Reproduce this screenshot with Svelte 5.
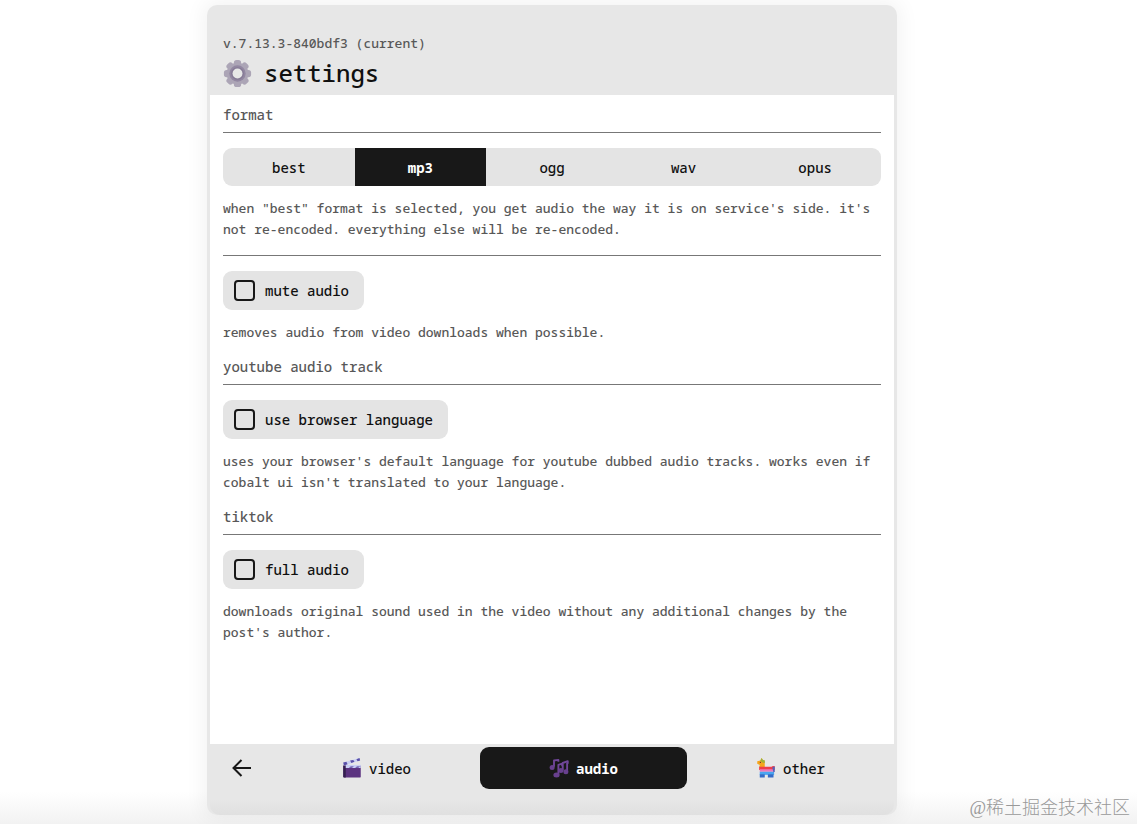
<script lang="ts">
	const formats = ['best', 'mp3', 'ogg', 'wav', 'opus'];
	const tabs = ['video', 'audio', 'other'];

	let format = $state('mp3');
	let tab = $state('audio');
	let muteAudio = $state(false);
	let browserLanguage = $state(false);
	let fullAudio = $state(false);
</script>

<div class="page">
	<main class="popup">
		<header>
			<p class="version">v.7.13.3-840bdf3 (current)</p>
			<h1>
				<svg class="gear" viewBox="0 0 32 32" aria-hidden="true">
					<g fill="#aca5b6">
						{#each [0, 45, 90, 135] as angle}
							<rect x="12" y="1" width="8" height="30" rx="3" transform="rotate({angle} 16 16)" />
						{/each}
						<circle cx="16" cy="16" r="12" />
					</g>
					<circle cx="16" cy="16" r="9" fill="#9287a1" />
					<circle cx="16" cy="16" r="7" fill="#857995" />
					<circle cx="16" cy="16" r="5.5" fill="#e7e7e7" />
				</svg>
				settings
			</h1>
		</header>

		<div class="content">
			<section>
				<h2>format</h2>
				<div class="switches">
					{#each formats as name}
						<button class:active={format === name} aria-pressed={format === name} onclick={() => (format = name)}>
							{name}
						</button>
					{/each}
				</div>
				<p class="explanation">
					when "best" format is selected, you get audio the way it is on service's side. it's not re-encoded. everything
					else will be re-encoded.
				</p>
				<hr />
				<label class="checkbox">
					<input type="checkbox" bind:checked={muteAudio} />
					mute audio
				</label>
				<p class="explanation">removes audio from video downloads when possible.</p>
			</section>

			<section>
				<h2>youtube audio track</h2>
				<label class="checkbox">
					<input type="checkbox" bind:checked={browserLanguage} />
					use browser language
				</label>
				<p class="explanation">
					uses your browser's default language for youtube dubbed audio tracks. works even if cobalt ui isn't translated
					to your language.
				</p>
			</section>

			<section>
				<h2>tiktok</h2>
				<label class="checkbox">
					<input type="checkbox" bind:checked={fullAudio} />
					full audio
				</label>
				<p class="explanation">
					downloads original sound used in the video without any additional changes by the post's author.
				</p>
			</section>
		</div>

		<nav>
			<button class="back" aria-label="back">
				<svg viewBox="0 0 20 20" aria-hidden="true">
					<path d="M19 10H1.5M9.5 2L1.5 10L9.5 18" fill="none" stroke="#181818" stroke-width="2" />
				</svg>
			</button>
			{#each tabs as name}
				<button class="tab" class:active={tab === name} onclick={() => (tab = name)}>
					<svg class="emoji" viewBox="0 0 32 32" aria-hidden="true">
						{#if name === 'video'}
							<rect x="2" y="12" width="28" height="19" rx="1" fill="#5c3380" />
							<path d="M2 12H6V31H4Q2 31 2 29Z" fill="#34204f" />
							<path d="M6 11H30V16H6Z" fill="#c9d0f4" />
							<path d="M11 16L14 13H19L16 16ZM21 16L24 13H29L26 16Z" fill="#7567b4" />
							<path d="M2 7L28 0L29 4L3 12Z" fill="#c9d0f4" />
							<path d="M2 7L7 6L9 10L3 12ZM13 4L18 3L20 6L15 8ZM23 2L28 0L29 4L25 5Z" fill="#5a50a8" />
						{:else if name === 'audio'}
							<g fill="none" stroke="#704699" stroke-width="3" stroke-linejoin="round">
								<path d="M8 14V4L15 3V6M15 26V11L21 9V13M22 20V8L30 5V9M29 8V21" />
							</g>
							<g fill="#68408e">
								<ellipse cx="5" cy="15" rx="4" ry="4" />
								<ellipse cx="12" cy="27" rx="5" ry="4" />
								<ellipse cx="19" cy="20" rx="4" ry="4" />
								<ellipse cx="27" cy="22" rx="4" ry="4" />
							</g>
						{:else}
							<path d="M2 5L7 4L9 0L11 3L14 4V15H5L6 11L2 9Z" fill="#f5a51c" />
							<path d="M7 4L9 0L11 3L14 4V8Q10 8 7 4Z" fill="#9bb33b" />
							<path d="M5 14H25Q26 12 30 13V19H5Z" fill="#ef3e4a" />
							<path d="M6 18H29V22H6Z" fill="#ef78ba" />
							<path d="M6 22H29V27H6Z" fill="#49a5f1" />
							<path d="M6 26H14V31H6ZM19 26H28V31H19Z" fill="#356cc9" />
							<path d="M26 15L30 13V21L28 23Z" fill="#5362bb" />
							<circle cx="7" cy="7" r="1" fill="#573638" />
						{/if}
					</svg>
					{name}
				</button>
			{/each}
		</nav>
	</main>
	<span class="watermark">@稀土掘金技术社区</span>
</div>

<style>
	:global(body) {
		margin: 0;
		background: #fff;
	}
	.page,
	button {
		font-family: 'Noto Sans Mono', 'DejaVu Sans Mono', monospace;
		color: #101010;
	}
	.page {
		position: relative;
		box-sizing: border-box;
		min-height: 100vh;
		padding: 5px 33px 9px 0;
		display: flex;
		background: linear-gradient(to top, #f2f2f2, #fff 32px);
	}
	.popup {
		box-sizing: border-box;
		width: 100%;
		max-width: 690px;
		margin: 0 auto;
		padding: 0 3px;
		display: flex;
		flex-direction: column;
		background: #e7e7e7;
		border-radius: 10px;
		box-shadow: 0 0 20px 4px rgba(0, 0, 0, 0.05);
	}
	header {
		padding: 28px 13px 3px;
	}
	h1,
	h2,
	p {
		margin: 0;
		font-weight: 500;
	}
	.version,
	.explanation {
		font-size: 13px;
		line-height: 21px;
		color: #585858;
	}
	h1 {
		display: flex;
		align-items: center;
		gap: 12px;
		font-size: 24px;
		line-height: 38px;
	}
	.gear {
		width: 29px;
		height: 29px;
	}
	.content {
		flex: 1;
		padding: 9px 13px 0;
		background: #fff;
	}
	h2 {
		margin-bottom: 15px;
		padding-bottom: 6px;
		border-bottom: 1px solid #777;
		font-size: 14px;
		line-height: 22px;
		color: #585858;
	}
	hr {
		margin: 0 0 15px;
		border: 0;
		border-top: 1px solid #777;
	}
	button {
		border: 0;
		padding: 0;
		background: none;
		font-size: 14px;
		font-weight: 500;
		cursor: pointer;
	}
	.switches {
		display: flex;
		border-radius: 9px;
		overflow: hidden;
		background: #e4e4e4;
	}
	.switches button {
		flex: 1;
		height: 38px;
	}
	button.active {
		background: #181818;
		color: #fff;
		font-weight: 700;
	}
	.explanation {
		padding: 12px 0 15px;
	}
	section > .explanation:last-child {
		padding-bottom: 13px;
	}
	.checkbox {
		box-sizing: border-box;
		width: fit-content;
		height: 39px;
		padding: 0 15px 0 11px;
		display: flex;
		align-items: center;
		gap: 10px;
		background: #e4e4e4;
		border-radius: 9px;
		font-size: 14px;
		font-weight: 500;
		cursor: pointer;
	}
	.checkbox input {
		appearance: none;
		box-sizing: border-box;
		width: 21px;
		height: 21px;
		margin: 0;
		border: 2px solid #181818;
		border-radius: 4px;
	}
	.checkbox input:checked {
		background: #181818;
		box-shadow: inset 0 0 0 3px #e4e4e4;
	}
	nav {
		display: flex;
		padding: 3px 0 26px;
		background: linear-gradient(to top, #e0e0e0, #e7e7e7 16px);
		border-radius: 0 0 10px 10px;
	}
	.back {
		width: 63px;
		height: 42px;
		display: flex;
		align-items: center;
		justify-content: center;
	}
	.back svg {
		width: 20px;
		height: 20px;
	}
	.tab {
		flex: 1;
		height: 42px;
		display: flex;
		align-items: center;
		justify-content: center;
		gap: 7px;
		border-radius: 9px;
	}
	.emoji {
		width: 20px;
		height: 20px;
	}
	.watermark {
		position: absolute;
		right: 7px;
		bottom: 4px;
		font-family: 'Liberation Serif', 'Noto Sans CJK SC', serif;
		font-size: 18px;
		font-weight: 300;
		line-height: 24px;
		color: #999;
	}
</style>
